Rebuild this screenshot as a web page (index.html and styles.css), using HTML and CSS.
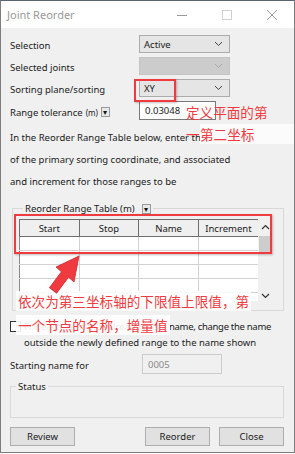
FILE: index.html
```html
<!DOCTYPE html>
<html lang="en">
<head>
    <meta charset="UTF-8">
    <meta name="viewport" content="width=device-width, initial-scale=1.0">
    <title>Joint Reorder</title>
    <link rel="stylesheet" href="styles.css">
</head>
<body>
    <div class="window">
        <div class="titlebar">
            <span class="title">Joint Reorder</span>
            <div class="controls">
                <svg width="12" height="12" viewBox="0 0 12 12"><path d="M1 6.5h10" stroke="#9a9a9a" stroke-width="1"/></svg>
                <svg width="12" height="12" viewBox="0 0 12 12"><rect x="1.5" y="1.5" width="9" height="9" fill="none" stroke="#d0d0d0" stroke-width="1"/></svg>
                <svg width="12" height="12" viewBox="0 0 12 12"><path d="M1 1l10 10M11 1L1 11" stroke="#9a9a9a" stroke-width="1"/></svg>
            </div>
        </div>

        <div class="content">
            <div class="form">
                <span class="lbl">Selection</span>
                <div class="select">
                    <span>Active</span>
                    <svg class="chev" width="9" height="6" viewBox="0 0 9 6"><path d="M1 1l3.5 3.5L8 1" fill="none" stroke="#444" stroke-width="1"/></svg>
                </div>

                <span class="lbl">Selected joints</span>
                <div class="select disabled">
                    <span></span>
                    <svg class="chev" width="9" height="6" viewBox="0 0 9 6"><path d="M1 1l3.5 3.5L8 1" fill="none" stroke="#aaa" stroke-width="1"/></svg>
                </div>

                <span class="lbl">Sorting plane/sorting</span>
                <div class="select">
                    <span>XY</span>
                    <svg class="chev" width="9" height="6" viewBox="0 0 9 6"><path d="M1 1l3.5 3.5L8 1" fill="none" stroke="#444" stroke-width="1"/></svg>
                </div>

                <span class="lbl">Range tolerance <small>(m)</small> <span class="unit-btn">&#9662;</span></span>
                <div class="input">0.03048</div>
            </div>

            <p class="hint first">In the Reorder Range Table below, enter the ranges</p>
            <p class="hint">of the primary sorting coordinate, and associated</p>
            <p class="hint">and increment for those ranges to be</p>

            <fieldset class="group range">
                <legend>Reorder Range Table (m) <span class="unit-btn">&#9662;</span></legend>
                <div class="grid-wrap">
                    <table class="grid">
                        <thead>
                            <tr>
                                <th>Start</th>
                                <th>Stop</th>
                                <th>Name</th>
                                <th>Increment</th>
                            </tr>
                        </thead>
                        <tbody>
                            <tr><td></td><td></td><td></td><td></td></tr>
                            <tr><td></td><td></td><td></td><td></td></tr>
                            <tr><td></td><td></td><td></td><td></td></tr>
                            <tr><td></td><td></td><td></td><td></td></tr>
                            <tr><td></td><td></td><td></td><td></td></tr>
                        </tbody>
                    </table>
                    <div class="scrollbar">
                        <svg width="9" height="6" viewBox="0 0 9 6"><path d="M1 5l3.5-3.5L8 5" fill="none" stroke="#333" stroke-width="1.2"/></svg>
                        <div class="thumb"></div>
                        <div class="track"></div>
                        <svg width="9" height="6" viewBox="0 0 9 6"><path d="M1 1l3.5 3.5L8 1" fill="none" stroke="#333" stroke-width="1.2"/></svg>
                    </div>
                </div>
            </fieldset>

            <div class="check-row">
                <span class="box"></span>
                <p>For each joint that already has a <span class="tight">name, change the name</span><br>outside the newly defined range to the name shown</p>
            </div>

            <div class="form start">
                <span class="lbl">Starting name for</span>
                <div class="input disabled">0005</div>
            </div>

            <fieldset class="group status">
                <legend>Status</legend>
            </fieldset>

            <div class="buttons">
                <button type="button">Review</button>
                <span class="spacer"></span>
                <button type="button">Reorder</button>
                <button type="button">Close</button>
            </div>
        </div>

        <!-- annotations drawn over the dialog -->
        <div class="mark mark-plane"></div>
        <div class="mark mark-table"></div>
        <div class="note note-plane">定义平面的第<br><span class="dash">一</span><span class="cover">第二坐标</span></div>
        <div class="note note-table">依次为第三坐标轴的下限值上限值，第</div>
        <div class="note note-name">一个节点的名称，增量值</div>
        <svg class="arrow" width="45" height="50" viewBox="40 250 45 50">
            <polygon points="78,255 73,281 67.6,276.2 55.6,292.2 48.4,286.8 60.4,270.8 55,266" fill="#ef3b3f" stroke="#c92a2e" stroke-width="0.8" stroke-linejoin="round"/>
        </svg>
    </div>
</body>
</html>
```

FILE: styles.css
```css
:root {
    --face: #f0f0f0;
    --btn: #e1e1e1;
    --btn-border: #adadad;
    --text: #1a1a1a;
    --red: #ef3b3f;
}

* {
    box-sizing: border-box;
}

body {
    margin: 0;
    background: #fff;
    font-family: "Noto Sans", "Open Sans", sans-serif;
    font-size: 9.5px;
    color: var(--text);
}

.window {
    position: relative;
    width: 295px;
    height: 453px;
    border: 1px solid #7d7d7d;
    border-top-color: #5a6470;
    display: flex;
    flex-direction: column;
    background: var(--face);
    overflow: hidden;
}

.titlebar {
    height: 27px;
    background: #fff;
    display: flex;
    align-items: center;
    padding-left: 6px;
}

.title {
    font-size: 11px;
    color: #999;
}

.controls {
    margin-left: auto;
    display: flex;
    gap: 33px;
    padding-right: 16px;
}

.content {
    flex: 1;
    padding: 0 9px;
    display: flex;
    flex-direction: column;
}

.form {
    display: grid;
    grid-template-columns: 129px 91px;
    row-gap: 4px;
    margin-top: 7px;
    align-items: center;
}

.lbl {
    padding-top: 3px;
    display: flex;
    align-items: center;
    gap: 3px;
}

.lbl small {
    font-size: 8px;
}

.unit-btn {
    display: inline-flex;
    align-items: center;
    justify-content: center;
    width: 9px;
    height: 10px;
    font-size: 8px;
    line-height: 1;
    background: #e8e8e8;
    border: 1px solid #9a9a9a;
    color: #111;
}

.select {
    height: 18px;
    display: flex;
    align-items: center;
    padding: 0 6px 0 4px;
    background: #e5e5e5;
    border: 1px solid #acacac;
}

.select .chev {
    margin-left: auto;
}

.select.disabled {
    background: #cccccc;
    border-color: #c4c4c4;
}

.input {
    height: 19px;
    width: 77px;
    display: flex;
    align-items: center;
    padding-left: 5px;
    background: #fff;
    border: 1px solid #7a7a7a;
}

.input.disabled {
    width: 80px;
    height: 20px;
    margin-left: 2px;
    background: var(--face);
    border-color: #cccccc;
    color: #8a8a8a;
}

.hint {
    margin: 2px 0 0;
    line-height: 20px;
    white-space: nowrap;
}

.hint.first {
    margin-top: 8px;
}

.group {
    margin: 0;
    padding: 0;
    border: 1px solid #d8d8d8;
}

.group legend {
    padding: 0 2px;
    line-height: 13px;
    display: flex;
    align-items: center;
    gap: 7px;
}

.range {
    margin: 10px 1px 0 2px;
    padding: 4px 10px 9px 6px;
}

.range legend {
    margin-left: 4px;
}

.grid-wrap {
    display: flex;
    height: 82px;
    overflow: hidden;
}

.grid {
    width: 239px;
    border-collapse: collapse;
    table-layout: fixed;
    background: #fff;
    align-self: flex-start;
}

.grid th {
    height: 17px;
    font-weight: normal;
    background: #efefef;
    border-left: 1px solid #6e6e6e;
    border-top: 1px solid #6e6e6e;
    border-bottom: 1px solid #6e6e6e;
    padding: 0;
    text-align: center;
}

.grid td {
    height: 14px;
    padding: 0;
    border-left: 1px solid #d2d2d2;
    border-bottom: 1px solid #d2d2d2;
}

.grid td:first-child {
    border-left-color: #8a8a8a;
}

.scrollbar {
    width: 14px;
    background: var(--face);
    display: flex;
    flex-direction: column;
    align-items: center;
    padding: 5px 0 2px;
}

.scrollbar .thumb {
    width: 12px;
    height: 17px;
    margin-top: 6px;
    background: #cdcdcd;
}

.scrollbar .track {
    flex: 1;
}

.check-row {
    display: flex;
    gap: 3px;
    margin-top: 8px;
}

.check-row .box {
    width: 11px;
    height: 11px;
    margin-top: 2px;
    flex: none;
    background: #fff;
    border: 1px solid #333;
}

.check-row p {
    margin: 0;
    line-height: 16px;
    white-space: nowrap;
}

.check-row .tight {
    letter-spacing: -0.3px;
}

.form.start {
    margin-top: 3px;
    grid-template-columns: 130px 84px;
}

.status {
    margin: 6px 1px 0 0;
    height: 38px;
}

.status legend {
    margin-left: 5px;
}

.buttons {
    display: flex;
    gap: 9px;
    margin-top: 9px;
    padding-right: 1px;
}

.buttons .spacer {
    flex: 1;
}

button {
    width: 65px;
    height: 19px;
    padding: 0;
    font-family: inherit;
    font-size: 9.5px;
    color: var(--text);
    background: var(--btn);
    border: 1px solid var(--btn-border);
}

.mark {
    position: absolute;
    border: 2px solid var(--red);
    box-shadow: 1px 1px 2px rgba(0, 0, 0, 0.25);
}

.mark-plane {
    left: 133px;
    top: 78px;
    width: 42px;
    height: 23px;
}

.mark-table {
    left: 13px;
    top: 213px;
    width: 258px;
    height: 40px;
}

.note {
    position: absolute;
    font-family: "Noto Sans CJK SC", sans-serif;
    font-size: 13.6px;
    line-height: 20px;
    color: var(--red);
    white-space: nowrap;
}

.note-plane {
    left: 185px;
    top: 100px;
    line-height: 22px;
}

.note-plane .dash {
    display: inline-block;
    width: 14px;
}

.note-plane .cover {
    background: #fbfbfb;
    padding-right: 40px;
}

.note-table {
    left: 15px;
    top: 290px;
    padding: 0 2px;
    background: rgba(255, 255, 255, 0.85);
}

.note-name {
    left: 15px;
    top: 314px;
    padding: 0 2px;
    background: rgba(255, 255, 255, 0.9);
}

.arrow {
    position: absolute;
    left: 40px;
    top: 250px;
}
```
